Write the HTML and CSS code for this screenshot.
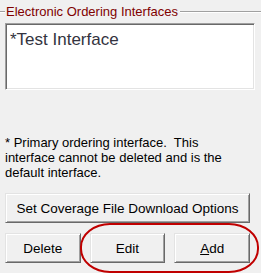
FILE: index.html
```html
<!DOCTYPE html>
<html>
<head>
  <meta charset="UTF-8">
  <title>Electronic Ordering Interfaces</title>
  <link rel="stylesheet" href="styles.css">
</head>
<body>
  <div class="panel">
    <div class="group-title">
      <span class="line short"></span>
      <span class="legend">Electronic Ordering Interfaces</span>
      <span class="line"></span>
    </div>

    <div class="listbox">
      <div class="item">*Test Interface</div>
    </div>

    <p class="note">* Primary ordering interface.&nbsp; This interface cannot be deleted and is the default interface.</p>

    <button class="btn wide">Set Coverage File Download Options</button>
    <div class="row">
      <button class="btn">Delete</button>
      <button class="btn">Edit</button>
      <button class="btn"><u>A</u>dd</button>
    </div>

    <div class="mark"></div>
  </div>
</body>
</html>
```

FILE: styles.css
```css
body{
  margin: 0;
  background-color: #f0f0f0;
  font-family: "Liberation Sans", Arial, sans-serif;
  color: #000000;
}

.panel{
  position: relative;
  width: 261px;
  height: 273px;
}

.group-title{
  display: flex;
  align-items: center;
  height: 22px;
}

.line{
  flex: 1;
  height: 1px;
  background-color: #a0a0a0;
  border-bottom: 1px solid #ffffff;
  margin-top: 1px;
}

.line.short{
  flex: none;
  width: 5px;
}

.legend{
  color: #800000;
  font-size: 13px;
  padding: 0 2px 0 1px;
}

.listbox{
  margin: 1px 6px 0 5px;
  height: 65px;
  background-color: #ffffff;
  border: 1px solid;
  border-color: #a0a0a0 #ffffff #ffffff #a0a0a0;
  box-shadow: inset 1px 1px #696969, inset -1px -1px #e3e3e3;
}

.item{
  padding: 6px 0 0 4px;
  font-size: 17px;
  color: #333340;
}

.note{
  margin: 45px 0 0 5px;
  width: 240px;
  font-size: 13px;
  line-height: 15px;
}

.btn{
  display: block;
  height: 30px;
  padding: 0;
  font-family: "Liberation Sans", Arial, sans-serif;
  font-size: 13.5px;
  color: #000000;
  background-color: #f0f0f0;
  border: 1px solid;
  border-color: #e3e3e3 #696969 #696969 #e3e3e3;
  box-shadow: inset 1px 1px #ffffff, inset -1px -1px #a0a0a0;
}

.btn.wide{
  width: 245px;
  margin: 13px 0 0 5px;
}

.row{
  display: grid;
  grid-template-columns: repeat(3, 1fr);
  gap: 9px;
  width: 245px;
  margin: 10px 0 0 5px;
}

.row .btn{
  width: 100%;
}

.mark{
  position: absolute;
  left: 80px;
  top: 223px;
  width: 175px;
  height: 46px;
  border: 2px solid #c00000;
  border-radius: 30px / 24px;
}
```
